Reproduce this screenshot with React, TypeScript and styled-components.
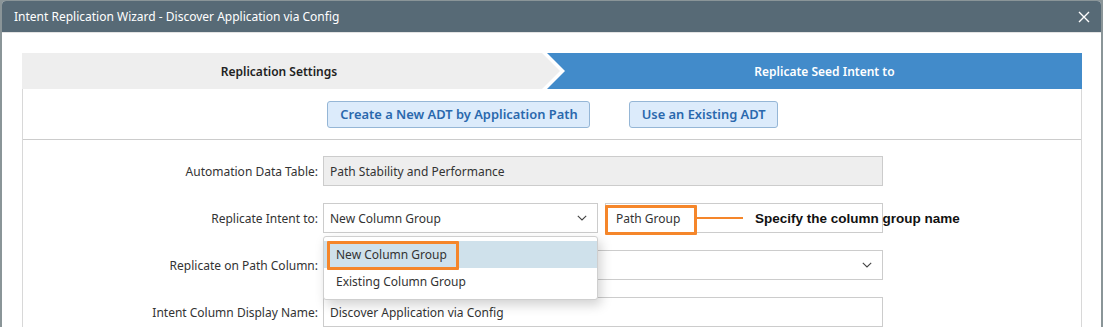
import React from "react";
import styled, { createGlobalStyle } from "styled-components";

const GlobalStyle = createGlobalStyle`
  html, body { margin: 0; padding: 0; }
  body {
    background: #8a9598;
    font-family: "Noto Sans", "Open Sans", "DejaVu Sans", sans-serif;
    font-size: 12px;
    color: #333;
    overflow: hidden;
  }
`;

const Dialog = styled.div`
  margin: 1px 2px 0 2px;
  height: 326px;
  background: #fff;
  border-radius: 4px 4px 0 0;
  overflow: hidden;
  display: flex;
  flex-direction: column;
`;

const TitleBar = styled.div`
  height: 31px;
  flex: none;
  background: #576a76;
  color: #fff;
  display: flex;
  align-items: center;
  justify-content: space-between;
  padding: 0 10px 0 12px;
  font-size: 12px;
  border-bottom: 1px solid #e3e3e3;
`;

const CloseButton = styled.button`
  border: 0;
  background: transparent;
  padding: 0;
  width: 14px;
  height: 14px;
  display: flex;
  align-items: center;
  justify-content: center;
  cursor: pointer;
`;

const Body = styled.div`
  padding: 20px 19px 0 20px;
  flex: 1;
`;

const Steps = styled.div`
  display: flex;
  height: 36px;
`;

const Step = styled.div<{ $active?: boolean; $first?: boolean }>`
  flex: none;
  width: ${(p) => (p.$first ? "538px" : "535px")};
  margin-left: ${(p) => (p.$first ? "0" : "-13px")};
  display: flex;
  align-items: center;
  justify-content: center;
  font-weight: 600;
  font-size: 12px;
  background: ${(p) => (p.$active ? "#428bca" : "#eeeeee")};
  color: ${(p) => (p.$active ? "#fff" : "#222")};
  padding: ${(p) => (p.$first ? "0 24px 0 0" : "0 0 0 20px")};
  box-sizing: border-box;
  clip-path: ${(p) =>
    p.$first
      ? "polygon(0 0, calc(100% - 18px) 0, 100% 50%, calc(100% - 18px) 100%, 0 100%)"
      : "polygon(0 0, 100% 0, 100% 100%, 0 100%, 18px 50%)"};
`;

const Panel = styled.div`
  border-left: 1px solid #d8d8d8;
  border-right: 1px solid #d8d8d8;
  height: 240px;
`;

const ButtonRow = styled.div`
  height: 50px;
  border-bottom: 1px solid #cccccc;
  display: flex;
  align-items: center;
  justify-content: center;
  gap: 39px;
  padding-left: 1px;
`;

const ActionButton = styled.button`
  height: 27px;
  padding: 0 11px 0 12px;
  background: #dcebfb;
  border: 1px solid #95b6d6;
  border-radius: 3px;
  color: #2a68ad;
  font-family: inherit;
  font-size: 12.9px;
  font-weight: 600;
  cursor: pointer;
`;

const Form = styled.div`
  padding-top: 16px;
  display: grid;
  grid-template-columns: 295px 560px;
  column-gap: 5px;
  row-gap: 17px;
  align-items: center;
`;

const Label = styled.div`
  text-align: right;
  font-size: 12px;
  color: #333;
`;

const Field = styled.div<{ $disabled?: boolean }>`
  height: 30px;
  box-sizing: border-box;
  border: 1px solid #cccccc;
  background: ${(p) => (p.$disabled ? "#eeeeee" : "#fff")};
  display: flex;
  align-items: center;
  padding: 0 10px 0 6px;
  font-size: 12px;
  color: #333;
  justify-content: space-between;
  position: relative;
`;

const SplitCell = styled.div`
  display: grid;
  grid-template-columns: 275px 278px;
  column-gap: 7px;
  position: relative;
`;

const PathGroupField = styled(Field)`
  padding-left: 10px;
`;

const Highlight = styled.div`
  position: absolute;
  box-sizing: border-box;
  border: 3px solid #f5862a;
  border-radius: 1px;
  pointer-events: none;
`;

const Callout = styled.div`
  position: absolute;
  left: 373px;
  top: 5px;
  height: 20px;
  display: flex;
  align-items: center;
`;

const CalloutLine = styled.div`
  width: 47px;
  height: 2px;
  background: #f5862a;
  margin-right: 12px;
`;

const CalloutText = styled.span`
  font-family: "Liberation Sans", Arial, sans-serif;
  font-weight: 700;
  font-size: 13.5px;
  color: #111;
  white-space: nowrap;
`;

const Dropdown = styled.div`
  position: absolute;
  left: 0;
  top: 33px;
  width: 275px;
  box-sizing: border-box;
  background: #fff;
  border: 1px solid #cfcfcf;
  border-radius: 3px;
  box-shadow: 3px 5px 12px rgba(0, 0, 0, 0.18);
  padding: 4px 0 4px 0;
  z-index: 5;
`;

const Option = styled.div<{ $selected?: boolean }>`
  height: 27px;
  display: flex;
  align-items: center;
  padding-left: 12px;
  font-size: 12px;
  color: #333;
  background: ${(p) => (p.$selected ? "#cfe1eb" : "transparent")};
  position: relative;
`;

const Chevron = () => (
  <svg width="10" height="6" viewBox="0 0 10 6">
    <path d="M0.8 0.8 L5 5 L9.2 0.8" fill="none" stroke="#444" strokeWidth="1.1" />
  </svg>
);

const CloseIcon = () => (
  <svg width="12" height="12" viewBox="0 0 12 12">
    <path d="M1 1 L11 11 M11 1 L1 11" stroke="#fff" strokeWidth="1.4" />
  </svg>
);

export default function App() {
  return (
    <>
      <GlobalStyle />
      <Dialog>
        <TitleBar>
          <span>Intent Replication Wizard - Discover Application via Config</span>
          <CloseButton aria-label="Close">
            <CloseIcon />
          </CloseButton>
        </TitleBar>
        <Body>
          <Steps>
            <Step $first>Replication Settings</Step>
            <Step $active>Replicate Seed Intent to</Step>
          </Steps>
          <Panel>
            <ButtonRow>
              <ActionButton>Create a New ADT by Application Path</ActionButton>
              <ActionButton>Use an Existing ADT</ActionButton>
            </ButtonRow>
            <Form>
              <Label>Automation Data Table:</Label>
              <Field $disabled>Path Stability and Performance</Field>

              <Label>Replicate Intent to:</Label>
              <SplitCell>
                <Field>
                  <span>New Column Group</span>
                  <Chevron />
                </Field>
                <PathGroupField>Path Group</PathGroupField>
                <Highlight style={{ left: 282, top: 2, width: 92, height: 30 }} />
                <Callout>
                  <CalloutLine />
                  <CalloutText>Specify the column group name</CalloutText>
                </Callout>
                <Dropdown>
                  <Option $selected>
                    New Column Group
                    <Highlight style={{ left: 3, top: 0, width: 132, height: 29 }} />
                  </Option>
                  <Option>Existing Column Group</Option>
                </Dropdown>
              </SplitCell>

              <Label>Replicate on Path Column:</Label>
              <Field>
                <span />
                <Chevron />
              </Field>

              <Label>Intent Column Display Name:</Label>
              <Field>Discover Application via Config</Field>
            </Form>
          </Panel>
        </Body>
      </Dialog>
    </>
  );
}
